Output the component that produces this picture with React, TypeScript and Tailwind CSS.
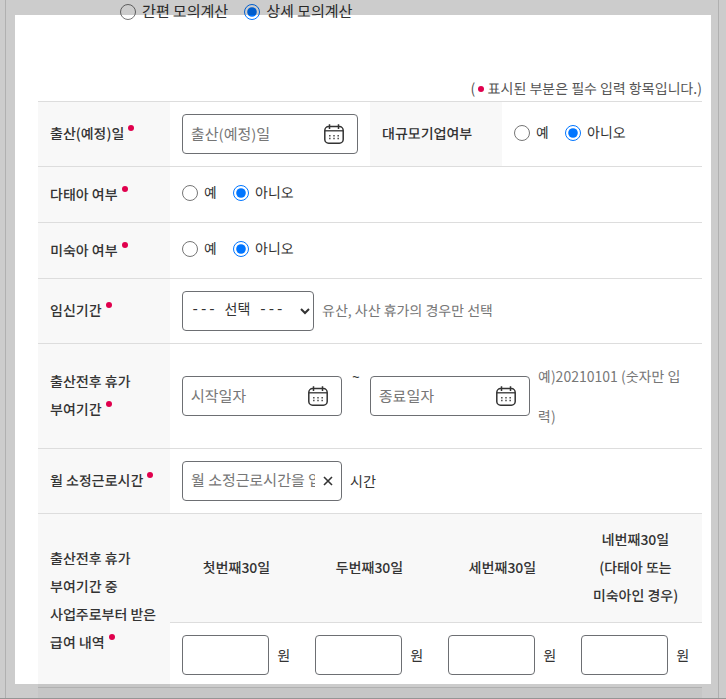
import React from 'react';

const RequiredDot: React.FC = () => (
  <span className="inline-block size-1.5 rounded-full bg-[#e0004d] ml-1 align-[8px]" />
);

const CalendarIcon: React.FC = () => (
  <svg width="20" height="20" viewBox="0 0 20 20" fill="none" stroke="#333" aria-hidden="true">
    <rect x="0.8" y="2.6" width="18.4" height="16.6" rx="3.8" strokeWidth="1.5" />
    <path d="M1 6.8h18" strokeWidth="1.3" />
    <path d="M5.5 0.2v4.8M14.5 0.2v4.8" strokeWidth="1.5" />
    <path d="M5 11.7h1.6M9.2 11.7h1.6M13.4 11.7h1.6M5 14.6h1.6M9.2 14.6h1.6M13.4 14.6h1.6" stroke="#555" strokeWidth="1.5" />
  </svg>
);

const fieldStyle =
  'w-full h-10 border border-[#6d6f73] rounded bg-white px-2 pb-0.5 text-[15px] text-[#333] placeholder:text-[#767676]';

interface DateFieldProps {
  label: string;
  className: string;
}

const DateField: React.FC<DateFieldProps> = ({ label, className }) => (
  <div className={`relative ${className}`}>
    <input type="text" aria-label={label} placeholder={label} className={fieldStyle} />
    <button type="button" aria-label={`${label} 달력`} className="absolute right-3.5 top-2.5">
      <CalendarIcon />
    </button>
  </div>
);

interface RadioProps {
  name: string;
  label: string;
  checked?: boolean;
}

const Radio: React.FC<RadioProps> = ({ name, label, checked }) => (
  <label className="flex items-center gap-1.5">
    <input type="radio" name={name} defaultChecked={checked} className="size-4 m-0" />
    <span className="pb-0.5">{label}</span>
  </label>
);

const YesNo: React.FC<{ name: string }> = ({ name }) => (
  <div className="flex gap-4 leading-[26px] mb-[3px]">
    <Radio name={name} label="예" />
    <Radio name={name} label="아니오" checked />
  </div>
);

const Head: React.FC<{ children: React.ReactNode; required?: boolean }> = ({ children, required }) => (
  <th scope="row" className="bg-[#f8f8f8] pl-3 pr-2 pt-2.5 pb-3 text-left font-medium leading-7 break-keep">
    {children}
    {required && <RequiredDot />}
  </th>
);

const PERIODS = [
  { id: 'first', title: '첫번째30일' },
  { id: 'second', title: '두번째30일' },
  { id: 'third', title: '세번째30일' },
  { id: 'fourth', title: '네번째30일', lines: ['(다태아 또는', '미숙아인 경우)'] },
];

export default function App() {
  return (
    <div className="relative bg-white border-b border-[#bbb] mb-px text-sm text-[#333] font-['Noto_Sans_KR','Noto_Sans_CJK_KR',sans-serif]">
      <main className="ml-[5px] mr-[7px] border-x border-[#ddd] pl-8 pr-4">
        <div className="flex gap-4 pl-[82px] h-6 text-[15px] leading-[22px]">
          <Radio name="mode" label="간편 모의계산" />
          <Radio name="mode" label="상세 모의계산" checked />
        </div>

        <p className="mt-[51px] text-right leading-[26px] text-[#555]">
          ( <span className="inline-block size-1.5 rounded-full bg-[#e0004d] align-[2px]" /> 표시된 부분은 필수 입력 항목입니다.)
        </p>

        <table className="w-full table-fixed border-collapse border-t border-[#ddd]">
          <colgroup>
            <col className="w-[132px]" />
            <col />
            <col className="w-[132px]" />
            <col />
          </colgroup>
          <tbody>
            <tr className="border-b border-[#ddd]">
              <Head required>출산(예정)일</Head>
              <td className="p-3">
                <DateField label="출산(예정)일" className="w-full" />
              </td>
              <Head>대규모기업여부</Head>
              <td className="p-3">
                <YesNo name="large" />
              </td>
            </tr>
            <tr className="border-b border-[#ddd]">
              <Head required>다태아 여부</Head>
              <td colSpan={3} className="p-3">
                <YesNo name="multiple" />
              </td>
            </tr>
            <tr className="border-b border-[#ddd]">
              <Head required>미숙아 여부</Head>
              <td colSpan={3} className="p-3">
                <YesNo name="premature" />
              </td>
            </tr>
            <tr className="border-b border-[#ddd]">
              <Head required>임신기간</Head>
              <td colSpan={3} className="p-3">
                <div className="flex items-center gap-2">
                  <select
                    aria-label="임신기간"
                    className="w-[132px] h-10 border border-[#6d6f73] rounded bg-white px-1 pb-0.5 text-sm font-['Liberation_Mono','Noto_Sans_CJK_KR',monospace]"
                  >
                    <option>--- 선택 ---</option>
                  </select>
                  <span className="pb-0.5 text-[#767676]">유산, 사산 휴가의 경우만 선택</span>
                </div>
              </td>
            </tr>
            <tr className="border-b border-[#ddd]">
              <Head required>출산전후 휴가 부여기간</Head>
              <td colSpan={3} className="p-3">
                <div className="flex items-center gap-2">
                  <DateField label="시작일자" className="w-40 shrink-0" />
                  <span className="w-3 shrink-0 self-start text-center leading-10">~</span>
                  <DateField label="종료일자" className="w-40 shrink-0" />
                  <span className="leading-10 break-all text-[#767676]">예)20210101 (숫자만 입력)</span>
                </div>
              </td>
            </tr>
            <tr className="border-b border-[#ddd]">
              <Head required>월 소정근로시간</Head>
              <td colSpan={3} className="p-3">
                <div className="flex items-center gap-2">
                  <div className="flex items-center w-40 h-10 border border-[#6d6f73] rounded px-2">
                    <input
                      type="text"
                      aria-label="월 소정근로시간"
                      placeholder="월 소정근로시간을 입력하세요"
                      className="min-w-0 flex-1 pb-0.5 text-[15px] placeholder:text-[#767676]"
                    />
                    <button type="button" aria-label="지우기" className="ml-2">
                      <svg width="10" height="10" viewBox="0 0 10 10" stroke="#333" strokeWidth="1.6" aria-hidden="true">
                        <path d="M1 1l8 8M9 1l-8 8" />
                      </svg>
                    </button>
                  </div>
                  <span>시간</span>
                </div>
              </td>
            </tr>
            <tr className="border-b border-[#ddd]">
              <Head required>출산전후 휴가 부여기간 중 사업주로부터 받은 급여 내역</Head>
              <td colSpan={3} className="p-0">
                <table className="w-full table-fixed border-collapse">
                  <thead>
                    <tr className="border-b border-[#ddd] bg-[#f8f8f8]">
                      {PERIODS.map((period) => (
                        <th key={period.id} scope="col" className="pt-[11px] pb-[13px] font-medium leading-7">
                          {period.title}
                          {period.lines?.map((line) => (
                            <span key={line} className="block">{line}</span>
                          ))}
                        </th>
                      ))}
                    </tr>
                  </thead>
                  <tbody>
                    <tr>
                      {PERIODS.map((period) => (
                        <td key={period.id} className="p-3">
                          <label className="flex items-center gap-2">
                            <input type="text" aria-label={period.title} className="w-4/5 h-10 shrink-0 border border-[#6d6f73] rounded px-2" />
                            원
                          </label>
                        </td>
                      ))}
                    </tr>
                  </tbody>
                </table>
              </td>
            </tr>
          </tbody>
        </table>
        <div className="h-2.5 bg-[#f8f8f8]" />
      </main>
      <div className="absolute inset-x-0 top-0 -bottom-px border-[15px] border-black/20 pointer-events-none" />
    </div>
  );
}
